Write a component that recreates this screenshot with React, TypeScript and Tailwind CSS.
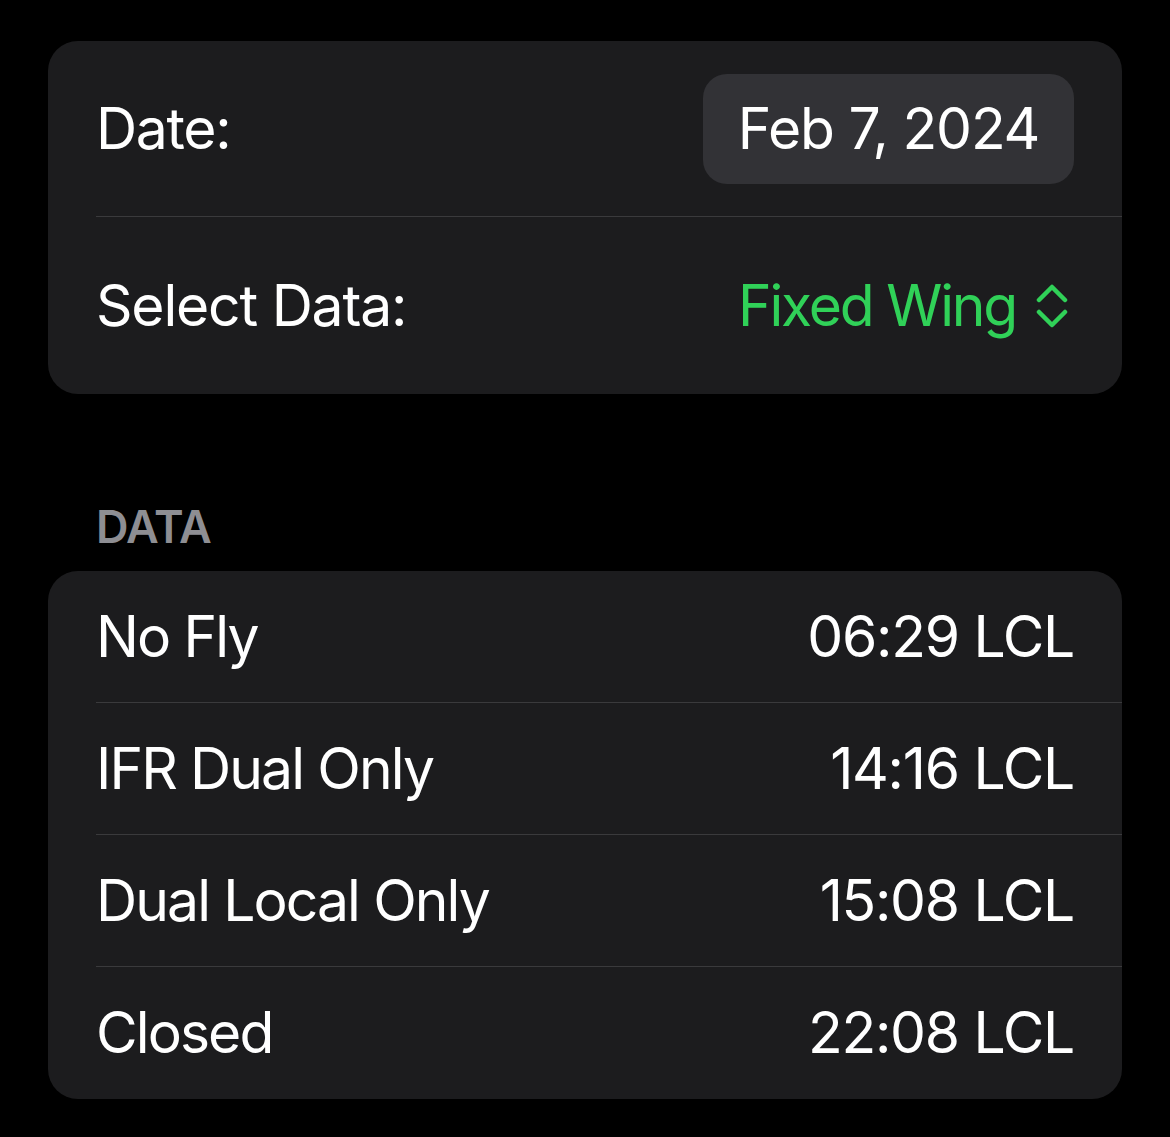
import React from 'react';

const font = { fontFamily: 'Inter, "Noto Sans", sans-serif' };

const rows = [
  { label: 'No Fly', time: '06:29 LCL' },
  { label: 'IFR Dual Only', time: '14:16 LCL' },
  { label: 'Dual Local Only', time: '15:08 LCL' },
  { label: 'Closed', time: '22:08 LCL' },
];

const UpDown = () => (
  <svg width="32" height="44" viewBox="0 0 32 44" fill="none" stroke="#30d158" strokeWidth="4.5" strokeLinecap="round" strokeLinejoin="round">
    <path d="M3 16 L16 3 L29 16" />
    <path d="M3 28 L16 41 L29 28" />
  </svg>
);

export default function App() {
  return (
    <div className="min-h-[1137px] w-full bg-black text-white" style={font}>
      <div className="px-12 pt-[41px]">
        {/* settings card */}
        <div className="rounded-[30px] bg-[#1c1c1e] pl-12 overflow-hidden">
          <div className="flex h-[176px] items-center justify-between border-b border-[#3a3a3c] pr-12">
            <span className="text-[57px] tracking-[-1.3px]">Date:</span>
            <div className="flex h-[110px] w-[371px] items-center justify-center rounded-[24px] bg-[#323236] text-[57px] tracking-[-1.2px]">
              Feb 7, 2024
            </div>
          </div>
          <div className="flex h-[177px] items-center justify-between pr-[54px]">
            <span className="text-[57px] tracking-[-1.2px]">Select Data:</span>
            <div className="flex items-center gap-[20px] text-[57px] tracking-[-2.2px] text-[#30d158]">
              <span>Fixed Wing</span>
              <UpDown />
            </div>
          </div>
        </div>

        {/* section header */}
        <div className="pl-12 pt-[108px] pb-[19px] text-[45px] font-semibold leading-[50px] tracking-[-0.8px] text-[#8e8e93]">
          DATA
        </div>

        <div className="rounded-[30px] bg-[#1c1c1e] pl-12 overflow-hidden">
          {rows.map((r, i) => (
            <div
              key={r.label}
              className={`flex h-[132px] items-center justify-between pr-12 ${i < rows.length - 1 ? 'border-b border-[#3a3a3c]' : ''}`}
            >
              <span className="text-[57px] tracking-[-1.9px]">{r.label}</span>
              <span className="text-[57px] tracking-[-1.3px]">{r.time}</span>
            </div>
          ))}
        </div>
      </div>
    </div>
  );
}
